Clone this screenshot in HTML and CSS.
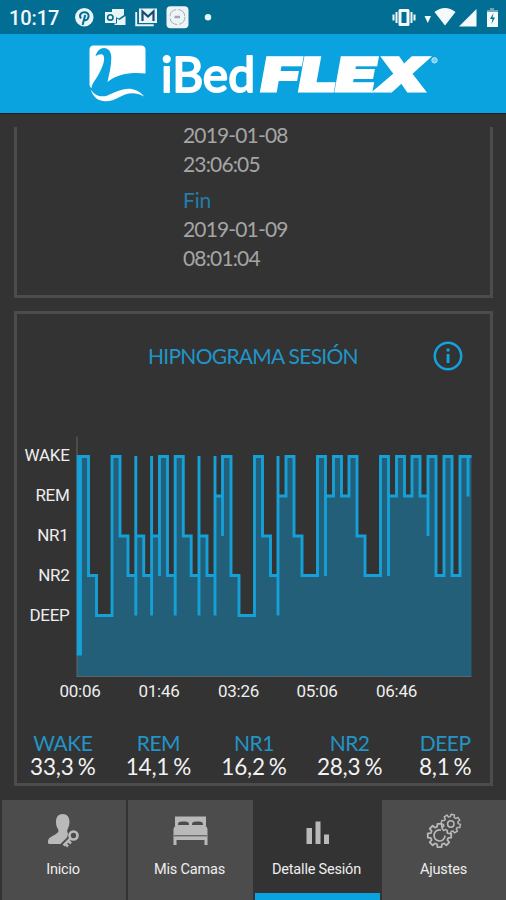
FILE: index.html
```html
<!DOCTYPE html>
<html lang="es">
<head>
<meta charset="utf-8">
<title>iBed FLEX</title>
<link rel="stylesheet" href="styles.css">
</head>
<body>
<div class="app">
  <div class="status">
    <span class="clock">10:17</span>
    <svg class="status-left" width="144" height="24" viewBox="74 5 144 24">
      <circle cx="84.3" cy="17.3" r="9.2" fill="#e9f4f7"/>
      <path d="M81 18.5c-2.5-3.5.5-6.5 3.8-6.3 4 .2 4.800 4.200 2.700 7-1.500 1.800-3.300 1-3.700.2M85.200 15l-2.600 10" fill="none" stroke="#036e93" stroke-width="2"/>
      <path d="M112 9h12v6l-5 3.500-7-3z" fill="#e9f4f7"/>
      <path d="M105 12h11v11h-11zM117 18.500l2.500 1.500 6-4v9h-11v-1.500h2.500z" fill="#e9f4f7"/>
      <circle cx="110.300" cy="17.400" r="2.700" fill="none" stroke="#036e93" stroke-width="1.600"/>
      <path d="M139 8.500h18v14.500h-18z" fill="#e9f4f7"/>
      <path d="M136.200 12v13.300h17.500" fill="none" stroke="#e9f4f7" stroke-width="1.900"/>
      <path d="M142.500 21V11.500l5.500 5 5.500-5V21" fill="none" stroke="#174c72" stroke-width="2.200"/>
      <rect x="166.500" y="6.200" width="22" height="22" rx="4" fill="#eef3f5"/>
      <circle cx="177.400" cy="17" r="7.500" fill="none" stroke="#9db1bc" stroke-width="1" stroke-dasharray="10 2"/>
      <path d="M174.500 17h5.500" stroke="#9ba9b1" stroke-width="2.500"/>
      <circle cx="208" cy="17.300" r="3.200" fill="#e9f4f7"/>
    </svg>
    <svg class="status-right" width="108" height="24" viewBox="390 5 108 24">
      <g fill="#f4fafc">
        <path d="M400 9h8a1.500 1.500 0 0 1 1.500 1.500v14a1.500 1.500 0 0 1-1.500 1.500h-8a1.500 1.500 0 0 1-1.500-1.500v-14A1.500 1.500 0 0 1 400 9zm1.500 3v11h5V12z" fill-rule="evenodd"/>
        <path d="M395.500 12h2v11h-2zM392.500 14.500h2v6h-2zM410.500 12h2v11h-2zM413.500 14.500h2v6h-2z"/>
        <path d="M424.500 16h6.500l-3.200 7zM434.500 12q10.500-8 21 0l-10.500 13.500zM459 26.500L476.500 9v17.500zM487 12h11v15h-11z"/>
        <path d="M487 12V10h3V8h4v2h4v2z" fill="#6aa9c0"/>
      </g>
      <path d="M493.500 13l-3.500 6h2.500L491.500 24l3.500-6.500h-2.500z" fill="#036e93"/>
    </svg>
  </div>
  <header class="brand">
    <svg width="506" height="78" viewBox="0 34 506 78">
      <path d="M93.500 45.500h47.500q4.500 0 4.500 4.500v23.500c-13-1.500-28 0-38 8.500 1.500-8 4-16 3.800-24.500-.2-6-3-9.500-7.300-9.500-4 0-7 3-8.500 8 3-1.500 6.500-3 8-.5 2 4-1 12-5.500 20-3 5-6 8-6.500 12.500q-2-1-2-3.500V50q0-4.500 4-4.500z" fill="#fff"/>
      <path d="M90.700 89.500c4 6 10 8 16.300 6.200 11-4.700 25-13.200 37.200.8-10-5-17-3.500-24.500.5-12 7-25 6-29-7.500z" fill="#fff"/>
      <text class="logo-light" x="161" y="91.800" textLength="94" lengthAdjust="spacingAndGlyphs">iBed</text>
      <text class="logo-heavy" transform="translate(262 91) skewX(3)" textLength="166" lengthAdjust="spacingAndGlyphs">FLEX</text>
      <circle cx="434.500" cy="60.300" r="2.700" fill="#78cfed" stroke="#b9e5f5" stroke-width="1"/>
    </svg>
  </header>
  <main class="content">
    <section class="card dates">
      <div class="date">2019-01-08</div>
      <div class="date">23:06:05</div>
      <div class="date label">Fin</div>
      <div class="date">2019-01-09</div>
      <div class="date">08:01:04</div>
    </section>
    <section class="card session">
      <div class="heading">
        <h1>HIPNOGRAMA SESIÓN</h1>
        <svg class="info" width="30" height="30" viewBox="0 0 30 30"><circle cx="15" cy="15" r="13.200" fill="none" stroke="#13a3dc" stroke-width="2.500"/><path d="M13.600 7.500h2.900v3h-2.900zM13.600 13h2.900v9h-2.900z" fill="#13a3dc"/></svg>
      </div>
      <svg class="chart" width="470" height="284" viewBox="18 430 470 284">
        <path d="M77 677V456.500H88.500V575.500H96.500V615.500H112V456.500H120V536H128V575.500H143.700V575.500H159.500V456.500H167.500V575.500H175.200V456.500H183.300V536H191.200V575.500H215V496H222.500V456.500H231V575.500H239V615.500H254.500V456.500H262.500V536H270.500V575.500H278V496H286V456.500H294V536H302V575.500H317.500V456.500H325.500V496H333.500V456.500H341.500V496H349V456.500H357V536H365V575.500H380.500V456.500H388.500V496H396.500V456.500H404.500V496H412V456.500H420V496H428V456.500H436V575.500H444V456.500H452V575.500H460V456.500H471.500V677z" fill="#235f78"/>
        <path d="M135.800 576V536H143.700V576zM151.600 576V536H159.500V576zM199 576V536H207V576z" fill="#235f78"/>
        <path d="M77 436.500V677" stroke="#666" stroke-width="1"/>
        <path d="M77 676.500H471.500" stroke="#626463" stroke-width="1"/>
        <path class="line" d="M78.200 655.500V456.500H88.500V575.500H96.500V615.500H112V456.500H120V536H128V575.500H135.800M80.500 456.500V655.500M135.800 456V615.500M135.800 536H143.700V575.500H151.600M151.600 456V615.500M151.600 536H159.500M159.500 576V456.500H167.500V575.500H175.200M175.200 615.500V456.500H183.300V536H191.200V575.500H199M199 456V615.500M199 536H207V575.500H215M215 456V615.500M215 496H222.500M222.500 536V456.500H231V575.500H239V615.500H254.500V456.500H262.500V536H270.500V575.500H278M278 456V615.500M278 496H286V456.500H294V536H302V575.500H317.500V456.500H325.500V576M325.500 496H333.500V456.500H341.500V496H349V456.500H357V536H365V575.500H380.500V456.500H388.500V576M388.500 496H396.500V456.500H404.500V496H412V456.500H420V496H428M428 536V456.500H436V575.500H444V456.500H452V575.500H460V456.500H471.500M468 456.500V496.500"/>
        <g class="axis">
          <g text-anchor="end"><text x="69.500" y="461.300">WAKE</text><text x="69.500" y="501.300">REM</text><text x="68.500" y="541.300">NR1</text><text x="69.500" y="581.300">NR2</text><text x="69.500" y="620.800">DEEP</text></g>
          <g text-anchor="middle"><text x="80" y="696.500">00:06</text><text x="159" y="696.500">01:46</text><text x="238.500" y="696.500">03:26</text><text x="317" y="696.500">05:06</text><text x="396.500" y="696.500">06:46</text></g>
        </g>
      </svg>
      <div class="stats">
        <div><b>WAKE</b><span>33,3 %</span></div>
        <div><b>REM</b><span>14,1 %</span></div>
        <div><b>NR1</b><span>16,2 %</span></div>
        <div><b>NR2</b><span>28,3 %</span></div>
        <div><b>DEEP</b><span>8,1 %</span></div>
      </div>
    </section>
  </main>
  <nav class="tabs">
    <div class="tab">
      <svg width="36" height="36" viewBox="0 0 36 36"><path d="M11 8.500C11 4 13.500 1 17.700 1s6.800 3 6.800 7.500c0 3-1 6-2 8-.6 1.500-.3 2.500.5 4l-1 5-4 5.500H4c-2-1-1-5 1-6.500l6-3.500c2.500-1.500 3-3 2-5-1.500-2-2-4-2-7.500z" fill="#b9b9b9"/><path d="M25.500 26l-7.500 7.500" stroke="#4c4c4c" stroke-width="7"/><circle cx="28.500" cy="22.500" r="5.500" fill="#4c4c4c"/><circle cx="28.500" cy="22.500" r="4" fill="none" stroke="#b9b9b9" stroke-width="2.700"/><path d="M25.500 25.500L18.500 32.500M20 30.500l3 3M23 27.500l3 3" fill="none" stroke="#b9b9b9" stroke-width="2.500"/></svg>
      <span>Inicio</span>
    </div>
    <div class="tab">
      <svg width="36" height="36" viewBox="0 0 36 36"><path d="M3 3.500h31V13H3z" fill="#b9b9b9"/><path d="M6 12c0-3 1-3.500 5.500-3.500s5.500.5 5.500 3.500zM20 12c0-3 1-3.500 5.500-3.500S31 9 31 12z" fill="#4c4c4c"/><path d="M1.500 17q0-4 3-4h28q3 0 3 4v15h-3v-5H4.500v5h-3z" fill="#b9b9b9"/><path d="M2 22.800h33" stroke="#4c4c4c" stroke-width="1"/></svg>
      <span>Mis Camas</span>
    </div>
    <div class="tab active">
      <svg width="36" height="36" viewBox="0 0 36 36"><path d="M7.500 15H13v16H7.500zM16.500 8.500H21.500V31h-5zM25 21.500h5V31h-5z" fill="#b9b9b9"/></svg>
      <span>Detalle Sesión</span>
    </div>
    <div class="tab">
      <svg width="36" height="36" viewBox="0 0 36 36">
        <defs><path id="gear" d="M9.850-1.740V1.740L7.340 1.970 6.580 3.800 8.190 5.740 5.740 8.190 3.800 6.580 1.970 7.340 1.740 9.850H-1.740L-1.970 7.340-3.800 6.580-5.740 8.190-8.190 5.740-6.580 3.800-7.340 1.970-9.850 1.740V-1.740L-7.340-1.970-6.580-3.800-8.190-5.740-5.740-8.190-3.800-6.580-1.970-7.340-1.740-9.850H1.740L1.970-7.340 3.800-6.580 5.740-8.190 8.190-5.740 6.580-3.800 7.340-1.970z"/></defs>
        <g fill="#4c4c4c" stroke="#b9b9b9" stroke-width="1.500" stroke-linejoin="round">
          <use href="#gear" transform="translate(13.500 22.500) scale(1.190)"/>
          <path d="M15 17.200A5.500 5.500 0 1 0 19 22.500" fill="none" stroke-width="1.700"/>
          <use href="#gear" transform="translate(24.800 11) rotate(12) scale(.970)"/>
          <circle cx="24.800" cy="11" r="3.200"/>
        </g>
      </svg>
      <span>Ajustes</span>
    </div>
  </nav>
</div>
</body>
</html>
```
FILE: styles.css
```css
* { box-sizing: border-box; }
body { margin: 0; background: #333; font-family: Lato, sans-serif; }
.app { display: flex; flex-direction: column; width: 506px; height: 900px; overflow: hidden; background: #333; }
.status { display: flex; align-items: center; height: 34px; padding: 0 8px 0 9px; background: #036e93; color: #f4fafc; }
.clock { width: 65px; font: 500 20px/34px Roboto, sans-serif; letter-spacing: -.1px; padding-top: 2px; }
.status-right { margin-left: auto; }
.brand { height: 80px; background: #0ba3df; border-bottom: 1.500px solid #101c22; }
.brand svg { display: block; }
.logo-light { font: 400 49px Lato, sans-serif; fill: #fff; stroke: #fff; stroke-width: 2px; stroke-linejoin: round; }
.logo-heavy { font: italic 900 46px Inter, sans-serif; fill: #fff; stroke: #fff; stroke-width: 2.800px; }
.content { flex: 1; padding: 13px 13px 0 14px; }
.card { border: 3px solid #4c4c4c; }
.dates { height: 171px; border-top: 0; padding: 0 0 0 166px; margin-bottom: 13px; }
.date { font-size: 21px; line-height: 29px; height: 29px; letter-spacing: -.850px; color: #a5a5a5; position: relative; top: -7px; }
.date.label { color: #217fa8; margin-top: 7px; letter-spacing: -.2px; }
.session { height: 475px; }
.heading { display: flex; align-items: center; height: 84px; padding: 0 27px 0 131px; justify-content: space-between; }
.heading h1 { margin: 0; font-size: 21px; font-weight: 400; line-height: 28px; letter-spacing: -.720px; color: #2195c8; white-space: nowrap; }
.chart { display: block; margin: 32px 0 0 1px; }
.line { fill: none; stroke: #15a0d7; stroke-width: 2.900px; }
.axis text { font: 400 17px Roboto, sans-serif; letter-spacing: -.3px; fill: #eee; }
.stats { display: grid; grid-template-columns: repeat(5, 95.600px); margin: 16px 0 0 -2px; text-align: center; }
.stats b, .stats span { display: block; font-weight: 400; line-height: 25px; }
.stats b { font-size: 21px; color: #2394c7; letter-spacing: -.5px; }
.stats span { font-size: 22.500px; line-height: 24px; color: #f2f2f2; letter-spacing: -.2px; word-spacing: -1.500px; }
.tabs { display: grid; grid-template-columns: 124px 125px 125px 125px; gap: 2px; height: 100px; padding-left: 2px; }
.tab { display: flex; flex-direction: column; align-items: center; background: #4c4c4c; padding: 13px 2px 0 0; font: 400 14.500px/20px Roboto, sans-serif; letter-spacing: -.2px; color: #eee; }
.tab span { margin-top: 11px; }
.tab.active { background: #333; box-shadow: inset 0 -7px #0ba3df; }
```
